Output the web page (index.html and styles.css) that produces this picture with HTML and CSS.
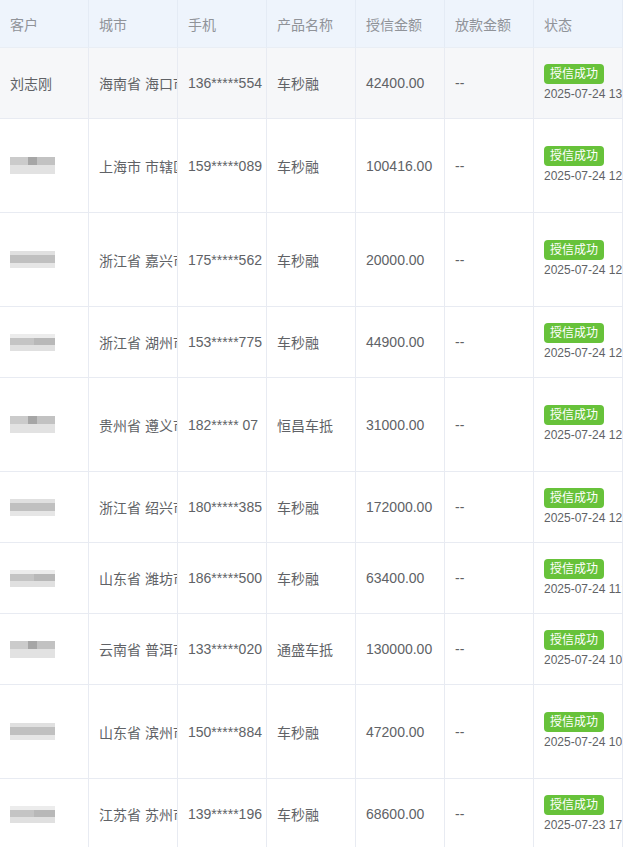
FILE: index.html
```html
<!DOCTYPE html>
<html lang="zh-CN">
<head>
<meta charset="utf-8">
<title>授信列表</title>
<link rel="stylesheet" href="styles.css">
</head>
<body>
<table class="grid">
  <colgroup>
    <col class="c"><col class="c"><col class="c"><col class="c"><col class="c"><col class="c"><col class="c">
  </colgroup>
  <thead>
    <tr class="head">
      <th>客户</th><th>城市</th><th>手机</th><th>产品名称</th><th>授信金额</th><th>放款金额</th><th>状态</th>
    </tr>
  </thead>
  <tbody>
    <tr class="r-s hover">
      <td>刘志刚</td><td>海南省 海口市</td><td>136*****554</td><td>车秒融</td><td>42400.00</td><td>--</td>
      <td><div class="st"><span class="tag">授信成功</span><span class="dt">2025-07-24 13:21:08</span></div></td>
    </tr>
    <tr class="r-t">
      <td><span class="mask m1"></span></td><td>上海市 市辖区</td><td>159*****089</td><td>车秒融</td><td>100416.00</td><td>--</td>
      <td><div class="st"><span class="tag">授信成功</span><span class="dt">2025-07-24 12:56:40</span></div></td>
    </tr>
    <tr class="r-t">
      <td><span class="mask m2"></span></td><td>浙江省 嘉兴市</td><td>175*****562</td><td>车秒融</td><td>20000.00</td><td>--</td>
      <td><div class="st"><span class="tag">授信成功</span><span class="dt">2025-07-24 12:40:17</span></div></td>
    </tr>
    <tr class="r-s">
      <td><span class="mask m3"></span></td><td>浙江省 湖州市</td><td>153*****775</td><td>车秒融</td><td>44900.00</td><td>--</td>
      <td><div class="st"><span class="tag">授信成功</span><span class="dt">2025-07-24 12:22:53</span></div></td>
    </tr>
    <tr class="r-t">
      <td><span class="mask m1"></span></td><td>贵州省 遵义市</td><td>182***** 07</td><td>恒昌车抵</td><td>31000.00</td><td>--</td>
      <td><div class="st"><span class="tag">授信成功</span><span class="dt">2025-07-24 12:10:35</span></div></td>
    </tr>
    <tr class="r-s">
      <td><span class="mask m2"></span></td><td>浙江省 绍兴市</td><td>180*****385</td><td>车秒融</td><td>172000.00</td><td>--</td>
      <td><div class="st"><span class="tag">授信成功</span><span class="dt">2025-07-24 12:02:11</span></div></td>
    </tr>
    <tr class="r-s">
      <td><span class="mask m3"></span></td><td>山东省 潍坊市</td><td>186*****500</td><td>车秒融</td><td>63400.00</td><td>--</td>
      <td><div class="st"><span class="tag">授信成功</span><span class="dt">2025-07-24 11:48:29</span></div></td>
    </tr>
    <tr class="r-s">
      <td><span class="mask m1"></span></td><td>云南省 普洱市</td><td>133*****020</td><td>通盛车抵</td><td>130000.00</td><td>--</td>
      <td><div class="st"><span class="tag">授信成功</span><span class="dt">2025-07-24 10:57:02</span></div></td>
    </tr>
    <tr class="r-t">
      <td><span class="mask m2"></span></td><td>山东省 滨州市</td><td>150*****884</td><td>车秒融</td><td>47200.00</td><td>--</td>
      <td><div class="st"><span class="tag">授信成功</span><span class="dt">2025-07-24 10:31:44</span></div></td>
    </tr>
    <tr class="r-s">
      <td><span class="mask m3"></span></td><td>江苏省 苏州市</td><td>139*****196</td><td>车秒融</td><td>68600.00</td><td>--</td>
      <td><div class="st"><span class="tag">授信成功</span><span class="dt">2025-07-23 17:15:36</span></div></td>
    </tr>
  </tbody>
</table>
</body>
</html>
```

FILE: styles.css
```css
html, body {
  margin: 0;
  padding: 0;
  background: #ffffff;
  overflow: hidden;
}

body {
  width: 624px;
  height: 847px;
  font-family: "Liberation Sans", "Noto Sans CJK SC", sans-serif;
  color: #606266;
  font-size: 14px;
}

.grid {
  border-collapse: separate;
  border-spacing: 0;
  table-layout: fixed;
  width: 623px;
}

.grid .c {
  width: 89px;
}

.grid th,
.grid td {
  box-sizing: border-box;
  padding: 0 0 0 10px;
  text-align: left;
  white-space: nowrap;
  overflow: hidden;
  border-right: 1px solid #e8ebf2;
  border-bottom: 1px solid #e8ebf2;
  vertical-align: middle;
}

.head th {
  height: 48px;
  background: #eef4fc;
  color: #909399;
  font-weight: normal;
  font-size: 14px;
  border-right-color: #e4ebf5;
  border-bottom-color: #e9eef5;
}

.r-s td { height: 71px; }
.r-t td { height: 94px; }

.hover td { background: #f6f7f9; }

.st {
  display: flex;
  flex-direction: column;
  align-items: flex-start;
  padding-top: 1px;
}

.tag {
  display: inline-block;
  height: 20px;
  line-height: 20px;
  padding: 0 6px;
  border-radius: 4px;
  background: #67c23a;
  color: #ffffff;
  font-size: 12px;
}

.dt {
  font-size: 12px;
  line-height: 20px;
  color: #606266;
}

.mask {
  display: block;
  width: 45px;
  height: 17px;
  filter: blur(0.7px);
}

.m1 {
  background:
    linear-gradient(to bottom, rgba(255,255,255,0) 0 50%, #e2e2e2 50% 100%),
    linear-gradient(to right, #cbcbcb 0 18px, #a6a6a6 18px 27px, #c2c2c2 27px 45px);
}

.m2 {
  background:
    linear-gradient(to bottom, #e0e0e0 0 25%, #c0c0c0 25% 70%, #e6e6e6 70% 100%);
}

.m3 {
  background:
    linear-gradient(to bottom, #ececec 0 22%, rgba(255,255,255,0) 22% 65%, #e0e0e0 65% 100%),
    linear-gradient(to right, #c4c4c4 0 24px, #b8b8b8 24px 45px);
}
```
